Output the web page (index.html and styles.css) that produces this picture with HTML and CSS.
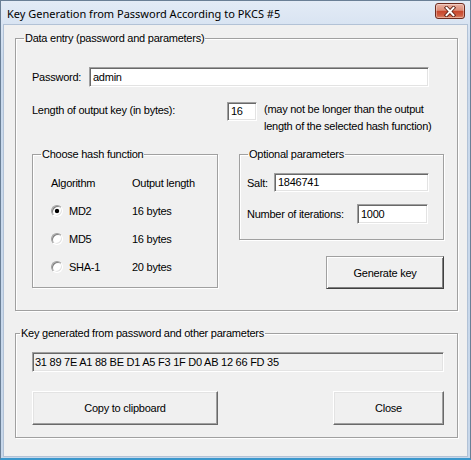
FILE: index.html
```html
<!DOCTYPE html>
<html>
<head>
<meta charset="utf-8">
<title>PKCS #5</title>
<link rel="stylesheet" href="styles.css">
</head>
<body>
<div class="window">
  <div class="titlebar">
    <span class="title">Key Generation from Password According to PKCS #5</span>
    <button class="close-x" aria-label="Close">
      <svg width="14" height="11" viewBox="0 0 14 11">
        <path d="M3.5 1.8 L10.5 9.2 M10.5 1.8 L3.5 9.2" stroke="#5a1d12" stroke-width="3.6" stroke-linecap="square" fill="none"/>
        <path d="M3.5 1.8 L10.5 9.2 M10.5 1.8 L3.5 9.2" stroke="#ffffff" stroke-width="2" stroke-linecap="square" fill="none"/>
      </svg>
    </button>
  </div>
  <div class="client">
    <fieldset class="group group-main">
      <legend>Data entry (password and parameters)</legend>
      <div class="main-body">
        <div class="pw-row">
          <span class="lbl pw-lbl">Password:</span>
          <div class="field pw-field">admin</div>
        </div>
        <div class="len-row">
          <span class="lbl len-lbl">Length of output key (in bytes):</span>
          <div class="field len-field">16</div>
          <div class="note">(may not be longer than the output<br>length of the selected hash function)</div>
        </div>
        <div class="cols">
          <fieldset class="group group-hash">
            <legend>Choose hash function</legend>
            <div class="hash-grid">
              <div class="cell">Algorithm</div><div class="cell">Output length</div>
              <div class="cell"><span class="radio checked"></span>MD2</div><div class="cell">16 bytes</div>
              <div class="cell"><span class="radio"></span>MD5</div><div class="cell">16 bytes</div>
              <div class="cell"><span class="radio"></span>SHA-1</div><div class="cell">20 bytes</div>
            </div>
          </fieldset>
          <div class="right-col">
            <fieldset class="group group-opt">
              <legend>Optional parameters</legend>
              <div class="opt-body">
                <div class="salt-row">
                  <span class="lbl salt-lbl">Salt:</span>
                  <div class="field salt-field">1846741</div>
                </div>
                <div class="iter-row">
                  <span class="lbl iter-lbl">Number of iterations:</span>
                  <div class="field iter-field">1000</div>
                </div>
              </div>
            </fieldset>
            <button class="btn btn-gen">Generate key</button>
          </div>
        </div>
      </div>
    </fieldset>
    <fieldset class="group group-key">
      <legend>Key generated from password and other parameters</legend>
      <div class="key-body">
        <div class="field key-field">31 89 7E A1 88 BE D1 A5 F3 1F D0 AB 12 66 FD 35</div>
        <div class="btn-row">
          <button class="btn btn-copy">Copy to clipboard</button>
          <button class="btn btn-close">Close</button>
        </div>
      </div>
    </fieldset>
  </div>
</div>
</body>
</html>
```
FILE: styles.css
```css
html, body {
  margin: 0;
  padding: 0;
  background: #ffffff;
}

body {
  font-family: "Liberation Sans", Arial, sans-serif;
  font-size: 11px;
  letter-spacing: -0.25px;
  color: #000;
}

.window {
  width: 471px;
  height: 460px;
  box-sizing: border-box;
  border: 1px solid #6a7f96;
  border-bottom: 2px solid #3a97cc;
  background: linear-gradient(#e3ebf6, #c9d9ec 60px, #c7d7ea);
  padding: 0 3px 2px 3px;
  display: flex;
  flex-direction: column;
}

.titlebar {
  height: 24px;
  flex: none;
  display: flex;
  align-items: center;
  justify-content: space-between;
  padding-left: 3px;
}

.title {
  font-family: "Noto Sans", "Open Sans", sans-serif;
  font-size: 11px;
  letter-spacing: 0;
  color: #000;
}

.close-x {
  align-self: flex-start;
  margin: 2px 2px 0 0;
  width: 30px;
  height: 16px;
  padding: 0;
  box-sizing: border-box;
  border: 1px solid #6e2b1f;
  border-radius: 3px;
  background: linear-gradient(#eab2a4 0%, #dc8c77 45%, #c7472d 52%, #cf5d42 80%, #dc8a6c 100%);
  box-shadow: inset 0 0 0 1px rgba(255, 255, 255, 0.35);
  display: flex;
  align-items: center;
  justify-content: center;
}

.client {
  flex: 1;
  background: #f0f0f0;
  box-shadow: 0 0 0 1px #b2c2d6;
}

.group {
  margin: 0;
  padding: 0;
  min-width: 0;
  border: 1px solid #a0a0a0;
  box-shadow: 1px 1px 0 #ffffff, inset 1px 1px 0 #ffffff;
}

.group > legend {
  padding: 0 1px;
  margin-left: 8px;
  line-height: 13px;
}

.group-main {
  margin: 7px 0 0 11px;
  width: 443px;
  box-sizing: border-box;
}

.main-body {
  padding: 22px 0 21px 16px;
}

.lbl {
  flex: none;
}

.field {
  box-sizing: border-box;
  height: 20px;
  background: #ffffff;
  border: 1px solid;
  border-color: #a0a0a0 #ffffff #ffffff #a0a0a0;
  box-shadow: inset 1px 1px 0 #696969, inset -1px -1px 0 #e3e3e3;
  padding-left: 3px;
  line-height: 18px;
  white-space: nowrap;
  overflow: hidden;
  flex: none;
}

.pw-row {
  display: flex;
  align-items: center;
  height: 20px;
}

.pw-lbl { width: 57px; }
.pw-field { width: 340px; }

.len-row {
  display: flex;
  align-items: flex-start;
  margin-top: 14px;
}

.len-lbl {
  width: 195px;
  line-height: 18px;
}

.len-field {
  width: 30px;
  height: 19px;
  line-height: 17px;
  margin-top: 1px;
}

.note {
  margin-left: 7px;
  line-height: 17px;
}

.cols {
  display: flex;
  align-items: flex-start;
  margin-top: 13px;
}

.group-hash {
  width: 186px;
  box-sizing: border-box;
}

.hash-grid {
  display: grid;
  grid-template-columns: 81px auto;
  grid-auto-rows: 28px;
  align-items: center;
  padding: 8px 0 6px 18px;
}

.cell {
  display: flex;
  align-items: center;
}

.radio {
  display: inline-block;
  width: 12px;
  height: 12px;
  box-sizing: border-box;
  border-radius: 50%;
  border: 1px solid;
  border-color: #a0a0a0 #ffffff #ffffff #a0a0a0;
  box-shadow: inset 1px 1px 0 #808080, inset -1px -1px 0 #e3e3e3;
  background: #ffffff;
  margin-right: 6px;
}

.radio.checked {
  background: radial-gradient(circle, #000 0, #000 1.8px, #ffffff 2.6px);
}

.right-col {
  margin-left: 21px;
  width: 205px;
  display: flex;
  flex-direction: column;
  align-items: flex-end;
}

.group-opt {
  width: 205px;
  box-sizing: border-box;
}

.opt-body {
  padding: 12px 0 15px 7px;
}

.salt-row {
  display: flex;
  align-items: center;
  height: 19px;
}

.salt-lbl { width: 27px; }
.salt-field { width: 155px; height: 19px; line-height: 17px; }

.iter-row {
  display: flex;
  align-items: center;
  height: 20px;
  margin-top: 12px;
}

.iter-lbl { width: 110px; }
.iter-field { width: 71px; }

.btn {
  font: inherit;
  letter-spacing: inherit;
  color: #000;
  box-sizing: border-box;
  padding: 0;
  background: #f0f0f0;
  border: 1px solid;
  border-color: #ffffff #696969 #696969 #ffffff;
  box-shadow: inset -1px -1px 0 #a0a0a0, inset 1px 1px 0 #e3e3e3;
}

.btn-gen {
  margin-top: 16px;
  width: 118px;
  height: 33px;
  border-color: #a0a0a0 #404040 #404040 #a0a0a0;
  box-shadow: inset 1px 1px 0 #ffffff, inset -1px -1px 0 #808080;
}

.group-key {
  margin: 16px 0 0 11px;
  width: 443px;
  box-sizing: border-box;
}

.group-key > legend {
  margin-left: 4px;
}

.key-body {
  padding: 12px 0 12px 16px;
}

.key-field {
  width: 412px;
  background: #f0f0f0;
  padding-left: 2px;
}

.btn-row {
  display: flex;
  justify-content: space-between;
  width: 412px;
  margin-top: 19px;
}

.btn-copy {
  width: 186px;
  height: 34px;
}

.btn-close {
  width: 111px;
  height: 34px;
}
```
